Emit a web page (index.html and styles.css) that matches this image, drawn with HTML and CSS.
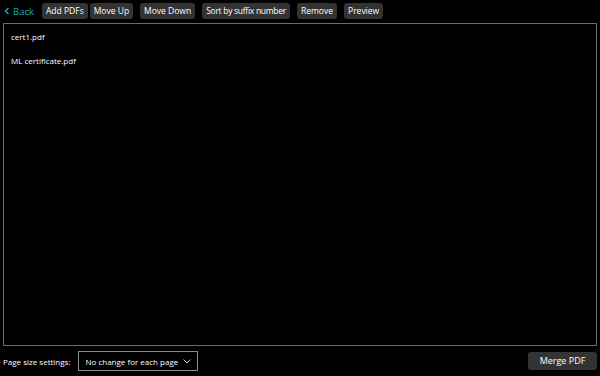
FILE: index.html
```html
<!DOCTYPE html>
<html>
<head>
<meta charset="utf-8">
<link rel="stylesheet" href="styles.css">
</head>
<body>
<div class="app">
  <div class="toolbar">
    <a class="back">
      <svg class="chev" width="6" height="8" viewBox="0 0 6 8"><path d="M4.5 1 L1.5 4 L4.5 7" fill="none" stroke="#1fa9b6" stroke-width="1.4"/></svg>
      <span>Back</span>
    </a>
    <button class="btn first">Add PDFs</button>
    <button class="btn tight">Move Up</button>
    <button class="btn">Move Down</button>
    <button class="btn sort">Sort by suffix number</button>
    <button class="btn">Remove</button>
    <button class="btn">Preview</button>
  </div>
  <div class="list">
    <div class="item">cert1.pdf</div>
    <div class="item">ML certificate.pdf</div>
  </div>
  <div class="footer">
    <span class="label">Page size settings:</span>
    <div class="select">
      <span>No change for each page</span>
      <svg width="8" height="5" viewBox="0 0 8 5"><path d="M0.5 0.5 L4 4 L7.5 0.5" fill="none" stroke="#ccc" stroke-width="1"/></svg>
    </div>
    <button class="btn merge">Merge PDF</button>
  </div>
</div>
</body>
</html>
```
FILE: styles.css
```css
html, body {
  margin: 0;
  padding: 0;
  background: #000;
}
body {
  width: 600px;
  height: 376px;
  overflow: hidden;
  font-family: "Open Sans", "Noto Sans", sans-serif;
  font-size: 8px;
  color: #fff;
}
.app {
  display: flex;
  flex-direction: column;
  height: 376px;
}
.toolbar {
  display: flex;
  align-items: center;
  padding: 3px 0 0 4px;
  height: 16px;
}
.back {
  display: flex;
  align-items: center;
  gap: 3px;
  color: #1fa9b6;
  font-size: 9.5px;
  width: 38px;
}
.btn {
  font-family: inherit;
  font-size: 8.5px;
  color: #fff;
  background: #333;
  border: none;
  border-radius: 3px;
  height: 16px;
  padding: 0 4px;
  margin: 0 0 0 7px;
  line-height: 16px;
  white-space: nowrap;
}
.btn.first { margin-left: 0; }
.btn.tight { margin-left: 2px; }
.btn.sort { letter-spacing: -0.28px; }
.list {
  margin: 4px 3px 0 3px;
  border: 1px solid #6b6b6b;
  flex: 1;
  padding-top: 1px;
}
.item {
  height: 24px;
  line-height: 24px;
  padding-left: 7px;
}
.footer {
  display: flex;
  align-items: center;
  height: 30px;
  padding: 0 3px;
}
.label {
  margin-right: 7px;
  white-space: nowrap;
}
.select {
  display: flex;
  align-items: center;
  justify-content: space-between;
  box-sizing: border-box;
  width: 120px;
  height: 20px;
  border: 1px solid #8a8a8a;
  padding: 0 6px 0 7px;
  white-space: nowrap;
}
.btn.merge {
  margin-left: auto;
  width: 69px;
  height: 18px;
  padding: 0;
  font-size: 9px;
}
```
